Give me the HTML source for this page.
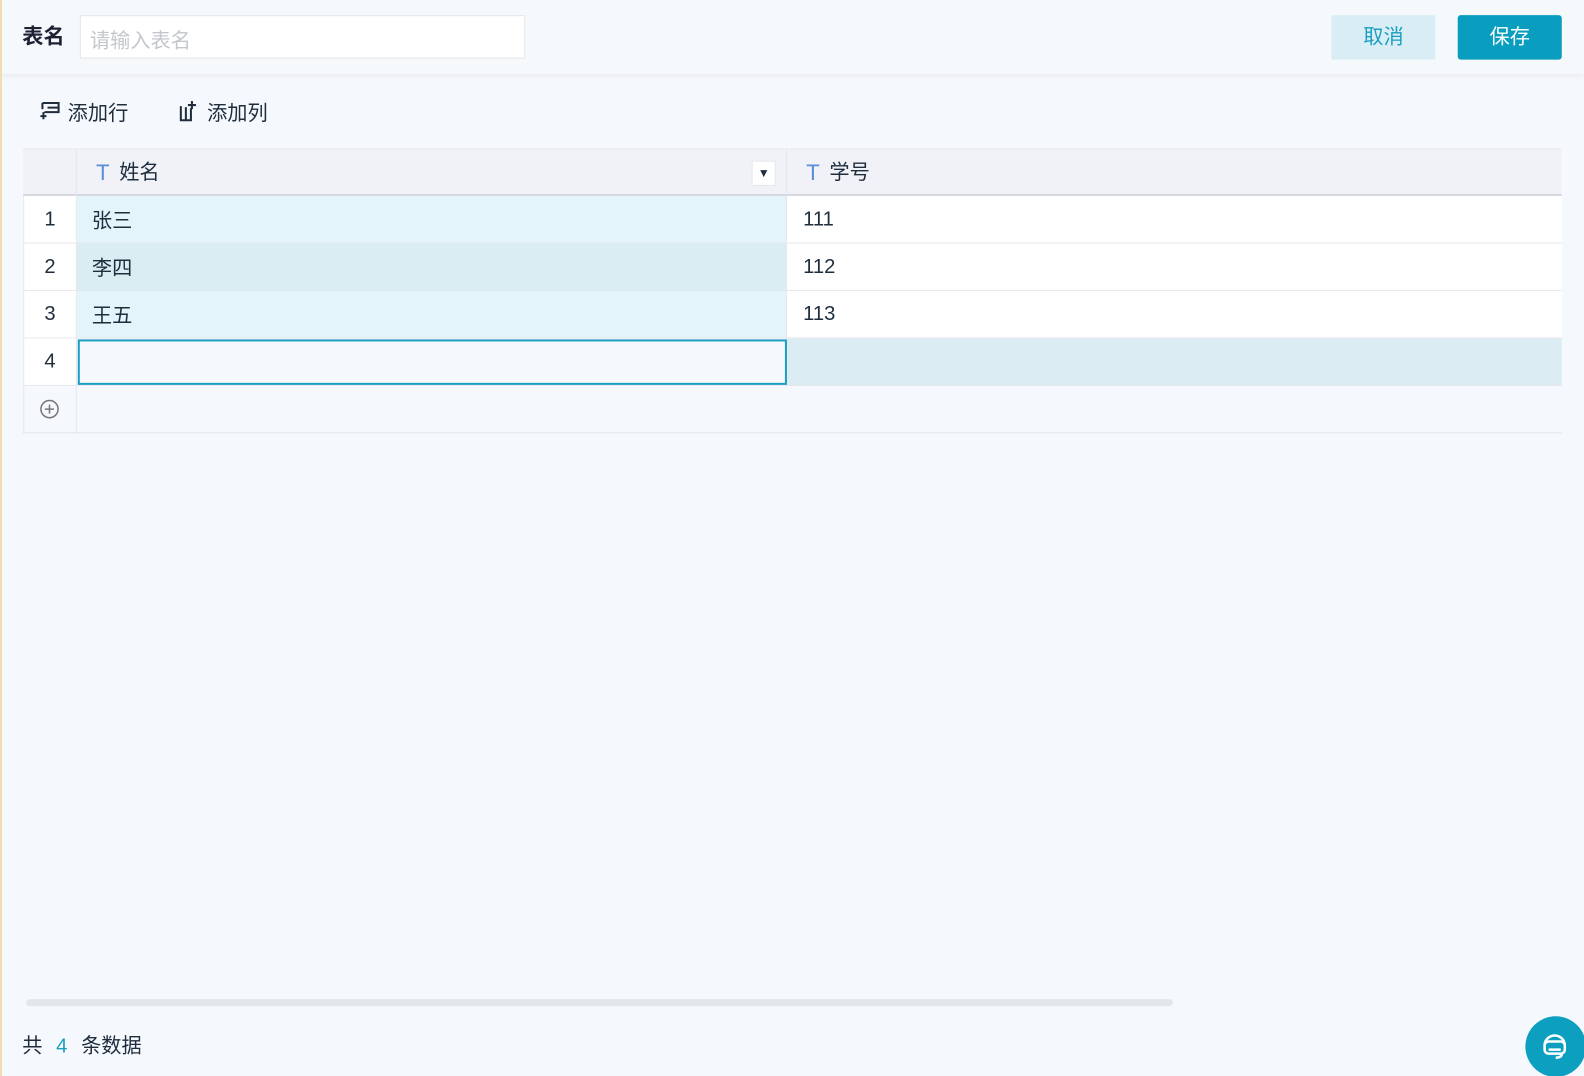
<!DOCTYPE html>
<html style="overflow:hidden;width:1584px;height:1076px"><head><meta charset="utf-8"><style>
*{box-sizing:border-box;margin:0;padding:0}
html,body{overflow:hidden}
body{width:1584px;height:1076px;background:#f5f8fc;font-family:"Liberation Sans","Noto Sans CJK SC",sans-serif;color:#1f2d3d;position:relative}
#w{position:absolute;left:0;top:0;width:1568px;height:1065px;transform:scale(1.0102);transform-origin:0 0}
.edge{position:absolute;left:0;top:0;width:2px;height:1076px;background:#f0dcb0;z-index:5}
.hdr{position:absolute;left:0;top:0;width:1568px;height:73px;background:#f6f9fc;box-shadow:0 2px 6px rgba(0,0,0,.06)}
.abs{position:absolute}
.cell{position:absolute;font-size:20px;line-height:46px}
</style></head><body>
<div id="w">
<div class="hdr">
 <div class="abs" style="left:22px;top:20px;font-size:21px;font-weight:bold;color:#1c2233">表名</div>
 <div class="abs" style="left:79px;top:15px;width:441px;height:43px;background:#fff;border:1px solid #e3e6ea;font-size:20px;color:#c3c7cc;padding:8px 9px">请输入表名</div>
 <div class="abs" style="left:1318px;top:15px;width:103px;height:44px;background:#d8eef4;border-radius:2px;color:#1b9ec0;font-size:20px;text-align:center;line-height:44px">取消</div>
 <div class="abs" style="left:1443px;top:15px;width:103px;height:44px;background:#099ec0;border-radius:3px;color:#fff;font-size:20px;text-align:center;line-height:44px">保存</div>
</div>
<svg class="abs" style="left:38px;top:100px" width="22" height="20" viewBox="0 0 22 20" fill="none" stroke="#1f2d3d" stroke-width="2"><path d="M4 2h16v9H6M4 2v6M9 6.5h11M5 11v7M2 15h6"/></svg>
<div class="abs" style="left:67px;top:96px;font-size:20px">添加行</div>
<svg class="abs" style="left:176px;top:99px" width="20" height="22" viewBox="0 0 20 22" fill="none" stroke="#1f2d3d" stroke-width="2"><path d="M3 6v14h10V8M8 7v13M14 1v8M10 5h8"/></svg>
<div class="abs" style="left:205px;top:96px;font-size:20px">添加列</div>

<div class="abs" style="left:23px;top:147px;width:1523px;height:282px;border-bottom:1px solid #e3e6ea;border-left:1px solid #e3e6ea"></div>
<div class="abs" style="left:23px;top:147px;width:1523px;height:47px;background:#f0f2f8;border-top:1px solid #e6e8ee;border-bottom:2px solid #d6d9de"></div>
<div class="abs" style="left:75px;top:147px;width:1px;height:282px;background:#e3e6ea"></div>
<div class="cell" style="left:95px;top:148px;color:#5a8ed8;font-size:22px">T</div>
<div class="cell" style="left:118px;top:148px">姓名</div>
<div class="abs" style="left:744px;top:159px;width:24px;height:25px;background:#fff;border:1px solid #e3e6ea;font-size:12px;text-align:center;line-height:23px">▼</div>
<div class="abs" style="left:778px;top:147px;width:1px;height:46px;background:#e6e8ee"></div>
<div class="cell" style="left:798px;top:148px;color:#5a8ed8;font-size:22px">T</div>
<div class="cell" style="left:821px;top:148px">学号</div>

<div class="abs" style="left:24px;top:194px;width:51px;height:188px;background:#fff"></div>
<div class="abs" style="left:76px;top:194px;width:703px;height:47px;background:#e4f4fb"></div>
<div class="abs" style="left:76px;top:241px;width:703px;height:47px;background:#d9edf3"></div>
<div class="abs" style="left:76px;top:288px;width:703px;height:47px;background:#e4f4fb"></div>
<div class="abs" style="left:779px;top:194px;width:767px;height:141px;background:#fff"></div>
<div class="abs" style="left:779px;top:335px;width:767px;height:47px;background:#dbedf3"></div>
<div class="abs" style="left:24px;top:240px;width:1522px;height:1px;background:#e6e8ee"></div>
<div class="abs" style="left:24px;top:287px;width:1522px;height:1px;background:#e6e8ee"></div>
<div class="abs" style="left:24px;top:334px;width:1522px;height:1px;background:#e6e8ee"></div>
<div class="abs" style="left:24px;top:381px;width:1522px;height:1px;background:#e6e8ee"></div>
<div class="abs" style="left:778px;top:194px;width:1px;height:188px;background:#e6e8ee"></div>
<div class="abs" style="left:77px;top:336px;width:702px;height:45px;border:2px solid #1a9fc0;background:#f5f8fc"></div>

<div class="cell" style="left:24px;top:194px;width:51px;text-align:center">1</div>
<div class="cell" style="left:24px;top:241px;width:51px;text-align:center">2</div>
<div class="cell" style="left:24px;top:288px;width:51px;text-align:center">3</div>
<div class="cell" style="left:24px;top:335px;width:51px;text-align:center">4</div>
<div class="cell" style="left:91px;top:196px">张三</div>
<div class="cell" style="left:91px;top:243px">李四</div>
<div class="cell" style="left:91px;top:290px">王五</div>
<div class="cell" style="left:795px;top:194px">111</div>
<div class="cell" style="left:795px;top:241px">112</div>
<div class="cell" style="left:795px;top:288px">113</div>
<svg class="abs" style="left:39px;top:395px" width="20" height="20" viewBox="0 0 20 20" fill="none" stroke="#777" stroke-width="1.5"><circle cx="10" cy="10" r="8.5"/><path d="M10 5.5v9M5.5 10h9"/></svg>

<div class="abs" style="left:26px;top:989px;width:1135px;height:7px;border-radius:4px;background:#e3e6ea"></div>
<div class="abs" style="left:22px;top:1019px;font-size:20px">共 <span style="color:#1a9fc0;margin:0 8px">4</span> 条数据</div>
<div class="abs" style="left:1510px;top:1006px;width:60px;height:60px;border-radius:50%;background:#0d9fc0"></div>
<svg class="abs" style="left:1522px;top:1018px" width="34" height="34" viewBox="0 0 34 34" fill="none" stroke="#fff" stroke-width="2.5"><path d="M7 17a10 10 0 0 1 20 0"/><rect x="7" y="13" width="20" height="12" rx="4"/><path d="M11 21h12M24 25q0 4-6 4"/></svg>
</div>
<div class="edge"></div>
</body></html>
